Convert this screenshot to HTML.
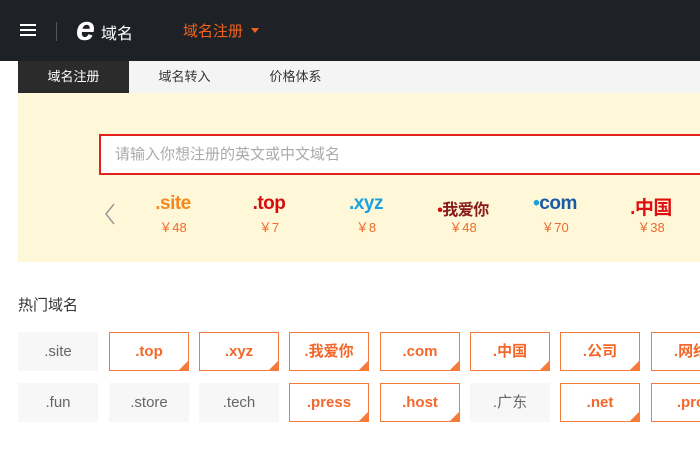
<!DOCTYPE html><html><head><meta charset="utf-8"><style>
*{margin:0;padding:0;box-sizing:border-box}
body{width:700px;height:454px;overflow:hidden;background:#fff;font-family:"Liberation Sans","Noto Sans CJK SC",sans-serif;position:relative}
.hd{position:absolute;left:0;top:0;width:700px;height:61px;background:#1e2226}
.ab{position:absolute}
.tab{position:absolute;top:61px;height:32px;line-height:32px;font-size:13px;text-align:center;color:#333;background:#f4f4f4}
.yl{position:absolute;left:18px;top:93px;width:682px;height:169px;background:#fef8d8}
.it{position:absolute;top:193px;width:90px;text-align:center;font-weight:bold;font-size:19px;letter-spacing:-.5px}
.pr{position:absolute;top:217px;width:90px;text-align:center;font-size:13px;color:#f06a2b}
.b{position:absolute;width:80px;height:39px;line-height:39px;text-align:center;font-size:15px;color:#666;background:#f7f7f7}
.o{background:#fff;border:1px solid #f57a3b;color:#f3682a;font-weight:bold;line-height:37px}
.o:after{content:"";position:absolute;right:0;bottom:0;border-style:solid;border-width:0 0 9px 9px;border-color:transparent transparent #f57a3b transparent}
</style></head><body>
<div class="hd">
<div class="ab" style="left:20px;top:24px;width:16px;height:2px;background:#fff;box-shadow:0 5px 0 #fff,0 10px 0 #fff"></div>
<div class="ab" style="left:56px;top:22px;width:1px;height:19px;background:#555"></div>
<div class="ab" style="left:76px;top:11px;font:italic bold 34px 'Liberation Sans',sans-serif;color:#fff;line-height:36px">e</div>
<div class="ab" style="left:101px;top:20px;font-size:16px;color:#fff">域名</div>
<div class="ab" style="left:183px;top:20px;font-size:15px;color:#f2621d">域名注册</div>
<div class="ab" style="left:251px;top:28px;border-style:solid;border-width:5px 4px 0 4px;border-color:#f2621d transparent transparent"></div>
</div>
<div class="tab" style="left:18px;width:682px"></div>
<div class="tab" style="left:18px;width:111px;background:#2b2b2b;color:#fff">域名注册</div>
<div class="tab" style="left:129px;width:111px">域名转入</div>
<div class="tab" style="left:240px;width:111px">价格体系</div>
<div class="yl"></div>
<div class="ab" style="left:99px;top:134px;width:610px;height:41px;border:2px solid #e3201c;background:#fff;font-size:15px;color:#aaa;line-height:37px;padding-left:14px">请输入你想注册的英文或中文域名</div>
<svg class="ab" style="left:104px;top:203px" width="12" height="22"><path d="M10 1 L2 11 L10 21" fill="none" stroke="#999" stroke-width="1.5"/></svg>
<div class="it" style="left:128px;color:#f7861d">.site</div><div class="pr" style="left:128px">￥48</div>
<div class="it" style="left:224px;color:#d50d0d">.top</div><div class="pr" style="left:224px">￥7</div>
<div class="it" style="left:321px;color:#1ba0e1">.xyz</div><div class="pr" style="left:321px">￥8</div>
<div class="it" style="left:418px;color:#8a1b1b;font-size:16px;top:196px"><span style="color:#d50d0d">•</span>我爱你</div><div class="pr" style="left:418px">￥48</div>
<div class="it" style="left:510px;color:#1a5aa8"><span style="color:#1ba0e1">•</span>com</div><div class="pr" style="left:510px">￥70</div>
<div class="it" style="left:606px;color:#e01010">.中国</div><div class="pr" style="left:606px">￥38</div>
<div class="ab" style="left:18px;top:294px;font-size:15px;color:#333">热门域名</div>
<div class="b" style="left:18px;top:332px">.site</div>
<div class="b o" style="left:109px;top:332px">.top</div>
<div class="b o" style="left:199px;top:332px">.xyz</div>
<div class="b o" style="left:289px;top:332px">.我爱你</div>
<div class="b o" style="left:380px;top:332px">.com</div>
<div class="b o" style="left:470px;top:332px">.中国</div>
<div class="b o" style="left:560px;top:332px">.公司</div>
<div class="b o" style="left:651px;top:332px">.网络</div>
<div class="b" style="left:18px;top:383px">.fun</div>
<div class="b" style="left:109px;top:383px">.store</div>
<div class="b" style="left:199px;top:383px">.tech</div>
<div class="b o" style="left:289px;top:383px">.press</div>
<div class="b o" style="left:380px;top:383px">.host</div>
<div class="b" style="left:470px;top:383px">.广东</div>
<div class="b o" style="left:560px;top:383px">.net</div>
<div class="b o" style="left:651px;top:383px">.pro</div>
</body></html>
